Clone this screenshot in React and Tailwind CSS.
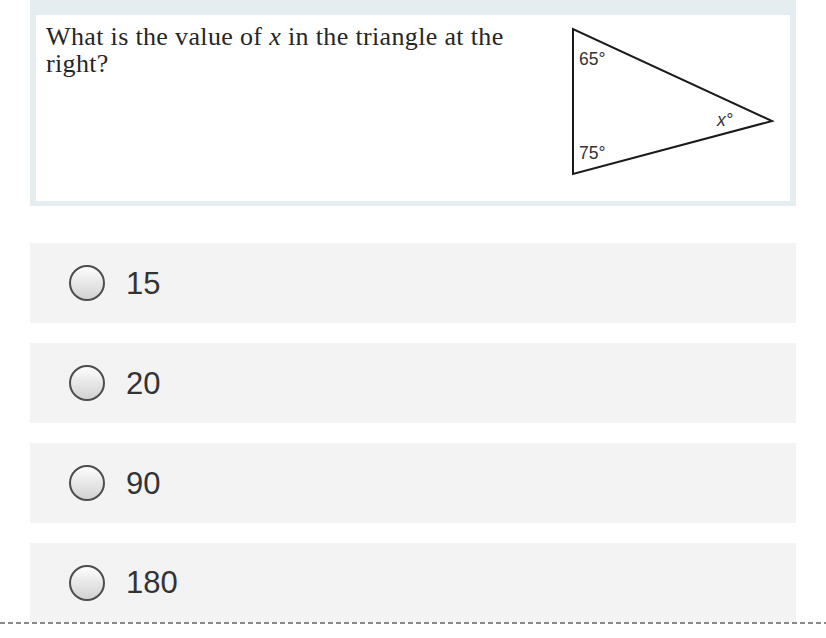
import React from 'react';

const options = ['15', '20', '90', '180'];

const Triangle = () => (
  <svg width="215" height="160" viewBox="0 0 215 160" className="shrink-0 mt-[10px]">
    <polygon points="7,4 7,149 206,96" fill="none" stroke="#1a1a1a" strokeWidth="2" strokeLinejoin="miter" />
    <g fill="#333" fontFamily="'Liberation Sans', Arial, sans-serif" fontSize="17.5">
      <text x="13" y="40">65°</text>
      <text x="13" y="134">75°</text>
      <text x="151" y="101" fontStyle="italic">x°</text>
    </g>
  </svg>
);

export default function App() {
  return (
    <div className="w-[826px] h-[638px] bg-white overflow-hidden">
      {/* Question panel */}
      <div className="ml-[30px] w-[766px] bg-[#e6edf0] pt-[15px] pb-[5px] px-[6px]">
        <div className="bg-white h-[186px] flex items-start">
          <p className="w-[530px] pl-[10px] pt-[8px] pr-[50px] font-['Liberation_Serif',serif] text-[26px] leading-[27px] tracking-[0.35px] text-[#262626]">
            What is the value of <i>x</i> in the triangle at the right?
          </p>
          <Triangle />
        </div>
      </div>

      {/* Answer choices */}
      <div className="mt-[37px] ml-[30px] w-[766px] flex flex-col gap-[20px]">
        {options.map((opt, i) => (
          <label
            key={opt}
            className={`flex items-center bg-[#f3f3f3] pl-[39px] cursor-pointer ${i === options.length - 1 ? 'h-[79px]' : 'h-[80px]'}`}
          >
            <span className="w-[36px] h-[36px] rounded-full border-2 border-[#4d4d4d] bg-linear-to-b from-[#fdfdfd] to-[#d2d2d2] shrink-0" />
            <span className="ml-[21px] font-['Liberation_Sans',Arial,sans-serif] text-[31px] leading-none text-[#333]">
              {opt}
            </span>
          </label>
        ))}
      </div>

      {/* Dashed separator */}
      <div className="h-[2px] w-full bg-[repeating-linear-gradient(to_right,#8a8a8a_0_5px,transparent_5px_8px)]" />
    </div>
  );
}
